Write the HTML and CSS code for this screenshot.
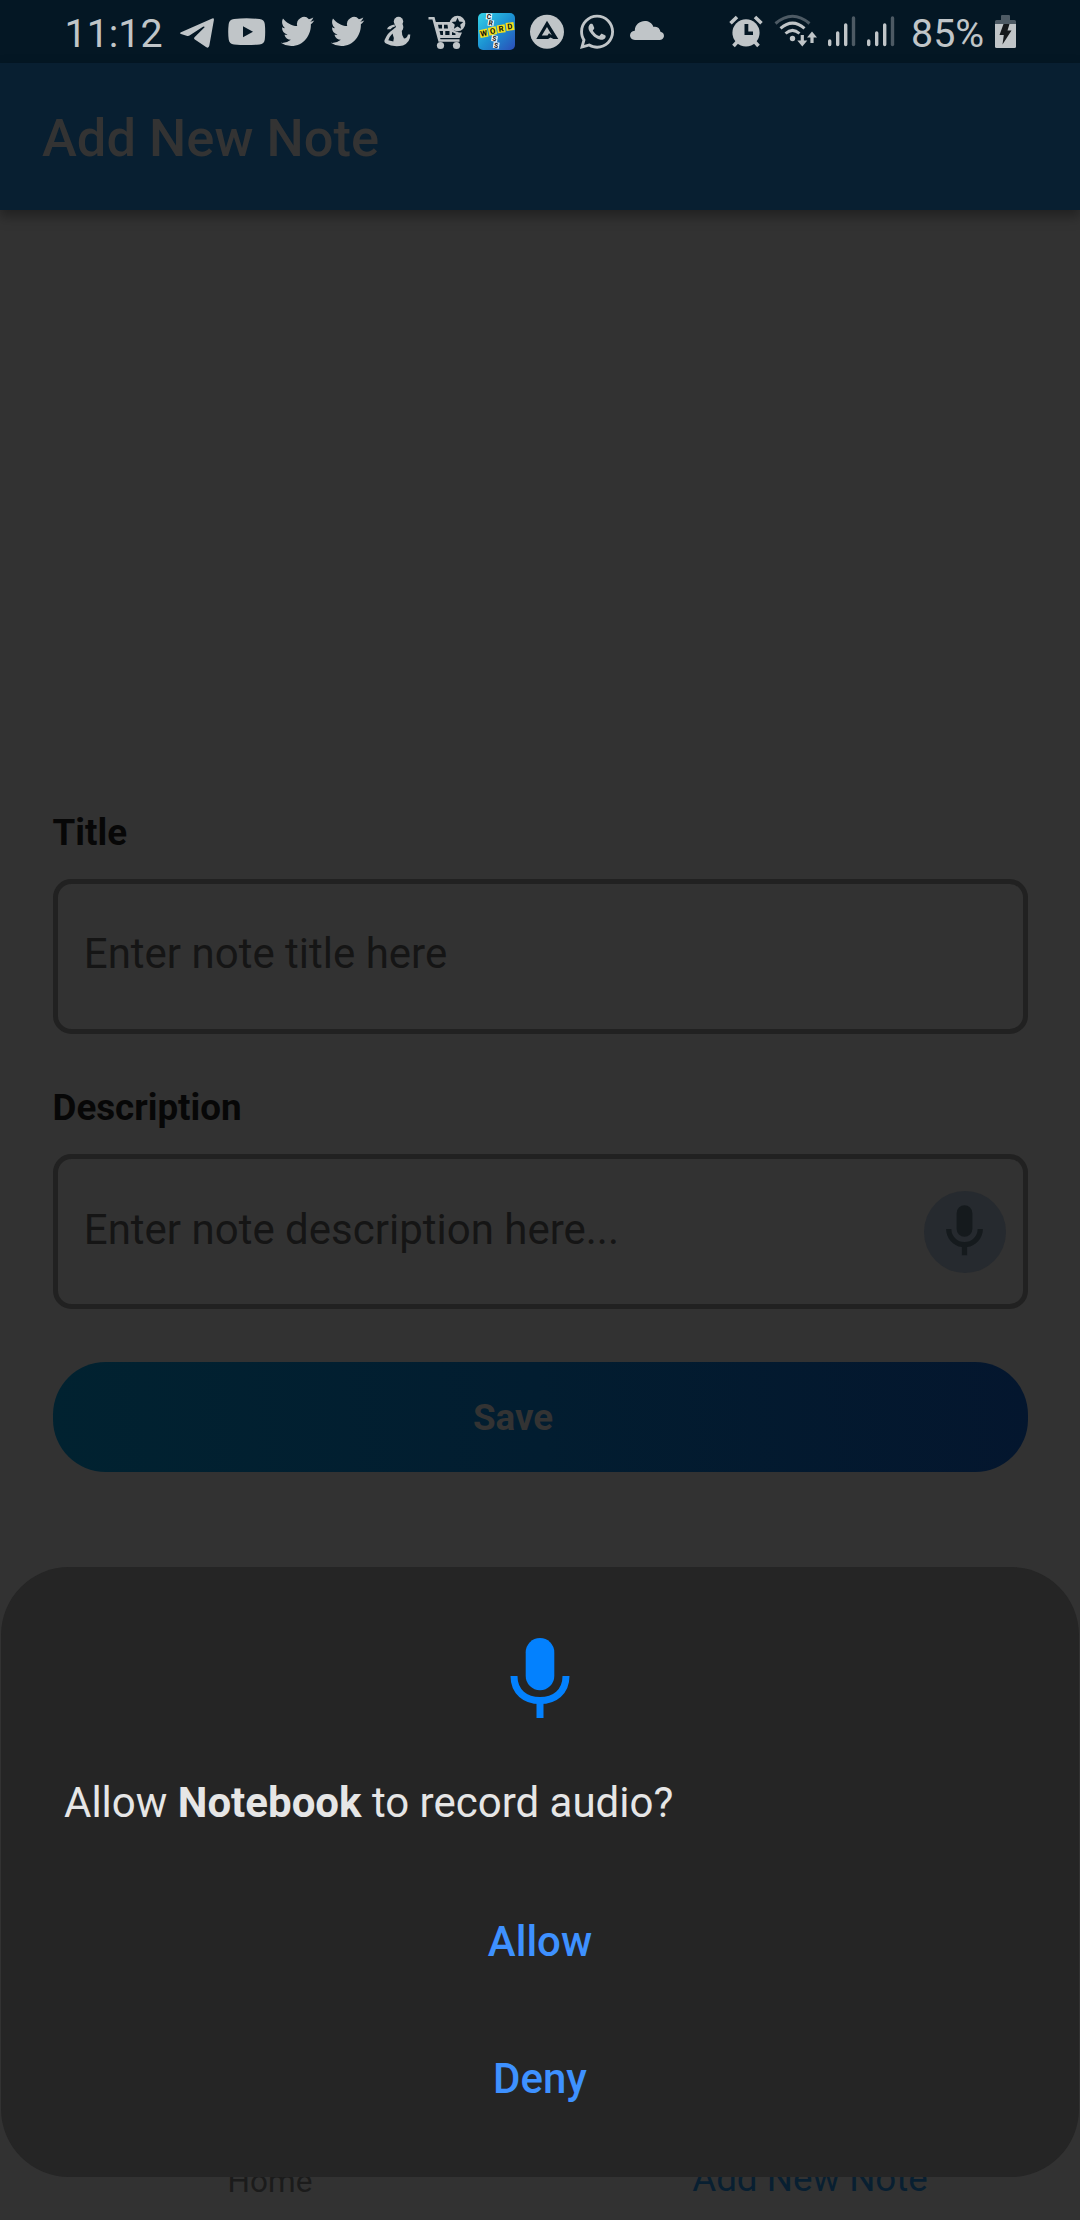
FILE: index.html
```html
<!DOCTYPE html>
<html lang="en">
<head>
<meta charset="utf-8">
<title>Add New Note</title>
<link rel="stylesheet" href="styles.css">
</head>
<body>
<div class="screen">
  <div class="status">
    <span class="time">11:12</span>
    <div class="notifications">
      <svg class="tile" viewBox="172 0 50 63"><path d="M181 32.3 212.200 18.600Q214.300 17.700 213.900 20L209.300 45.800Q208.600 48.700 206 47L194.500 39.200Q193.500 38.200 194.500 37.200L204.600 27.300Q204.500 26 203 26.700L189.500 35.600Q188.500 36.200 187.300 35.900L181 34Q179 33.200 181 32.300Z"/></svg>
      <svg class="tile" viewBox="222 0 50 63"><path fill-rule="evenodd" d="M234 19Q246.500 17.600 259.500 19 264.300 19.400 264.800 24 265.600 31.500 264.800 39.500 264.300 44 259.500 44.400 246.500 45.800 234 44.400 229.300 44 228.700 39.500 227.700 31.500 228.700 24 229.300 19.400 234 19ZM243 26.300V37.300L253 31.800Z"/></svg>
      <svg class="tile" viewBox="272 0 50 63"><path transform="translate(280.700 13.700) scale(1.400 1.490)" d="M23.953 4.57a10 10 0 01-2.825.775 4.958 4.958 0 002.163-2.723c-.951.555-2.005.959-3.127 1.184a4.92 4.92 0 00-8.384 4.482C7.69 8.095 4.067 6.13 1.640 3.162a4.822 4.822 0 00-.666 2.475c0 1.710.87 3.213 2.188 4.096a4.904 4.904 0 01-2.228-.616v.06a4.923 4.923 0 003.946 4.827 4.996 4.996 0 01-2.212.085 4.936 4.936 0 004.604 3.417 9.867 9.867 0 01-6.102 2.105c-.39 0-.779-.023-1.170-.067a13.995 13.995 0 007.557 2.209c9.053 0 13.998-7.496 13.998-13.985 0-.21 0-.42-.015-.63A9.935 9.935 0 0024 4.590z"/></svg>
      <svg class="tile" viewBox="272 0 50 63"><path transform="translate(280.700 13.700) scale(1.400 1.490)" d="M23.953 4.57a10 10 0 01-2.825.775 4.958 4.958 0 002.163-2.723c-.951.555-2.005.959-3.127 1.184a4.92 4.92 0 00-8.384 4.482C7.69 8.095 4.067 6.13 1.640 3.162a4.822 4.822 0 00-.666 2.475c0 1.710.87 3.213 2.188 4.096a4.904 4.904 0 01-2.228-.616v.06a4.923 4.923 0 003.946 4.827 4.996 4.996 0 01-2.212.085 4.936 4.936 0 004.604 3.417 9.867 9.867 0 01-6.102 2.105c-.39 0-.779-.023-1.170-.067a13.995 13.995 0 007.557 2.209c9.053 0 13.998-7.496 13.998-13.985 0-.21 0-.42-.015-.63A9.935 9.935 0 0024 4.590z"/></svg>
      <!-- seated figure -->
      <svg class="tile" viewBox="372 0 50 63"><circle cx="398.500" cy="21.500" r="4.700"/><path d="M394.500 24 402.500 24Q404.500 28 401.800 31 401.500 34.500 404 38.500 407 38.500 408 34.500L410.300 34.500Q410.500 42 403 45.500 393 47.500 386 43.500 383.500 42 384.800 39.500 387.500 33 393 29.500L396 27ZM392.500 33.500Q389.500 36.500 388.300 40.300L393.300 41.500Q394.500 37.500 392.500 33.500Z" fill-rule="evenodd"/><path d="M387 29.300Q388 25.500 394.500 24.500L395 26.500Q392 27 390.500 29.300Z"/></svg>
      <!-- cart with starred badge -->
      <svg class="tile" viewBox="422 0 50 63"><path d="M428.500 18.300H433.500L439.500 40.500H459.500" fill="none" stroke="currentColor" stroke-width="2.600"/><path fill-rule="evenodd" d="M434.500 22H450Q450.500 31 459 32.500H462L459.500 38H438.500ZM438 24.800 438.800 28.500H442V24.800ZM444 24.800V28.500H448L447.500 24.800ZM439.500 31 440.500 35H443V31ZM445.300 31V35H449.500V31ZM452 32V35H455.500V33.500Z"/><circle cx="440.500" cy="45.500" r="3.600"/><circle cx="456.500" cy="45.500" r="3.600"/><circle cx="457.500" cy="23.500" r="7.800"/><path class="cut" d="M457.500 17.700 459.200 21.500 463.300 21.900 460.200 24.700 461.100 28.700 457.500 26.600 453.900 28.700 454.800 24.700 451.700 21.900 455.800 21.500Z"/></svg>
      <!-- word puzzle game -->
      <svg class="tile" viewBox="472 0 50 63">
        <defs><linearGradient id="sea" x1="0" y1="0" x2="1" y2="1"><stop offset="0" stop-color="#35d3e8"/><stop offset=".5" stop-color="#1c92d2"/><stop offset="1" stop-color="#2b4db8"/></linearGradient></defs>
        <rect x="478" y="13" width="37" height="37" rx="5" fill="url(#sea)"/>
        <g class="letters">
          <g transform="translate(489 16.500) rotate(6)"><rect x="-3" y="-3" width="6" height="6"/><text y="2.400">C</text></g>
          <g transform="translate(490.800 23) rotate(8)"><rect x="-3" y="-3" width="6" height="6"/><text y="2.400">R</text></g>
          <g transform="translate(494.500 38.500) rotate(8)"><rect x="-3" y="-3" width="6" height="6"/><text y="2.400">S</text></g>
          <g transform="translate(496.200 45.300) rotate(8)"><rect x="-3" y="-3" width="6" height="6"/><text y="2.400">S</text></g>
        </g>
        <g class="letters wide">
          <g transform="translate(483.800 33.300) rotate(-12)"><rect x="-4" y="-4" width="8" height="8"/><text y="2.700">W</text></g>
          <g transform="translate(492.500 31) rotate(-12)"><rect x="-4" y="-4" width="8" height="8"/><text y="2.700">O</text></g>
          <g transform="translate(501.200 28.800) rotate(-8)"><rect x="-4" y="-4" width="8" height="8"/><text y="2.700">R</text></g>
          <g transform="translate(510 26.500) rotate(-8)"><rect x="-4" y="-4" width="8" height="8"/><text y="2.700">D</text></g>
        </g>
      </svg>
      <svg class="tile" viewBox="522 0 50 63"><circle cx="547" cy="31.800" r="17"/><path class="cut" fill-rule="evenodd" d="M547 20.800 558.300 39H553.500L550.500 37.600 548 39H536.300ZM547 27 541.800 35.500H547.500L549 33.300 551.800 35.200Z"/></svg>
      <svg class="tile" viewBox="572 0 50 63"><path transform="translate(576.500 11.300) scale(1.710)" d="M12.040 2C6.580 2 2.130 6.450 2.130 11.910C2.130 13.660 2.590 15.360 3.450 16.860L2.050 22L7.300 20.620C8.750 21.410 10.380 21.830 12.040 21.830C17.500 21.830 21.950 17.380 21.950 11.920C21.950 9.270 20.920 6.780 19.050 4.910C17.180 3.030 14.690 2 12.040 2M12.050 3.670C14.250 3.670 16.310 4.530 17.870 6.090C19.420 7.650 20.280 9.720 20.280 11.920C20.280 16.460 16.580 20.150 12.040 20.150C10.560 20.150 9.110 19.760 7.850 19L7.550 18.830L4.430 19.650L5.260 16.610L5.060 16.290C4.240 15 3.800 13.470 3.800 11.910C3.810 7.370 7.500 3.670 12.050 3.670M8.530 7.330C8.370 7.330 8.100 7.390 7.870 7.640C7.650 7.890 7 8.500 7 9.710C7 10.930 7.890 12.100 8 12.270C8.140 12.440 9.760 14.940 12.250 16C12.840 16.270 13.300 16.420 13.660 16.530C14.250 16.720 14.790 16.690 15.220 16.630C15.700 16.560 16.680 16.030 16.890 15.450C17.100 14.870 17.100 14.380 17.040 14.270C16.970 14.170 16.810 14.110 16.560 14C16.310 13.860 15.090 13.260 14.870 13.180C14.640 13.100 14.500 13.060 14.310 13.300C14.150 13.550 13.670 14.110 13.530 14.270C13.380 14.440 13.240 14.460 13 14.340C12.740 14.210 11.940 13.950 11 13.110C10.260 12.450 9.770 11.640 9.620 11.390C9.500 11.150 9.610 11 9.730 10.890C9.840 10.780 10 10.600 10.100 10.450C10.230 10.310 10.270 10.200 10.350 10.040C10.430 9.870 10.390 9.730 10.330 9.610C10.270 9.500 9.770 8.260 9.560 7.770C9.360 7.290 9.160 7.240 9 7.230C8.860 7.230 8.700 7.230 8.530 7.330Z"/></svg>
      <svg class="tile" viewBox="622 0 50 63"><path d="M635 40C628.300 39.700 628.500 31.300 634.800 30.800 634.800 20 650 17.300 653.500 27 659.500 26 660 31 660.500 31.700 666 33 664.500 40 659.500 40Z"/></svg>
    </div>
    <div class="system">
      <svg class="alarm" viewBox="729 0 34 63"><circle cx="746" cy="32.800" r="13.600"/><path d="M730.500 23.200 737 17M761.500 23.200 755 17" fill="none" stroke="currentColor" stroke-width="3.600"/><path d="M738 41 733.500 46M754 41 758.500 46" fill="none" stroke="currentColor" stroke-width="3.600"/><path class="cut" d="M744.500 24H748.300V31.500H753V35H744.500Z"/></svg>
      <svg class="wifi" viewBox="774 0 43 63"><g fill="none" stroke="currentColor" stroke-width="3"><path class="dim" d="M775.500 23.500Q792.500 9 809.500 23.500"/><path d="M780.500 28.300Q792.500 18 804.500 28.300M785.500 33.500Q792.500 27.300 799.500 33.500"/></g><circle cx="792.500" cy="38.500" r="2.700"/><path d="M800.700 35H803.900V40.500H807.300L802.300 46.500 797.300 40.500H800.700ZM810.400 43H813.600V37.500H817L812 31.500 807 37.500H810.400Z"/></svg>
      <svg class="bars" viewBox="828 0 28 63"><g fill="none" stroke="currentColor" stroke-width="3.400" stroke-linecap="round"><path d="M829.700 41V44.500M837.700 33V44.500M845.700 25V44.500"/><path class="dim" d="M853.500 18V44.500"/></g></svg>
      <svg class="bars" viewBox="828 0 28 63"><g fill="none" stroke="currentColor" stroke-width="3.400" stroke-linecap="round"><path d="M829.700 41V44.500M837.700 33V44.500M845.700 25V44.500"/><path class="dim" d="M853.500 18V44.500"/></g></svg>
      <span class="percent">85%</span>
      <svg class="battery" viewBox="995 0 21 63"><path class="dim-fill" d="M1001 16Q1001 15 1002 15H1009Q1010 15 1010 16V20H1014.500Q1016 20 1016 21.500V24H995V21.500Q995 20 996.500 20H1001Z"/><path d="M995 24H1016V46.500Q1016 48 1014.500 48H996.500Q995 48 995 46.500Z"/><path class="bolt" d="M1003.500 24H1009.500L1007.500 30.500H1011.500L1002.500 44.500 1003.800 35H999.500Z"/></svg>
    </div>
  </div>

  <header class="bar"><h1>Add New Note</h1></header>

  <main class="form">
    <label class="label">Title</label>
    <div class="field"><span>Enter note title here</span></div>
    <label class="label">Description</label>
    <div class="field">
      <span>Enter note description here...</span>
      <div class="mic">
        <svg viewBox="0 0 24 24"><path d="M12 2A3 3 0 0 1 15 5V11A3 3 0 0 1 9 11V5A3 3 0 0 1 12 2M19 11C19 14.530 16.390 17.440 13 17.930V21H11V17.930C7.610 17.440 5 14.530 5 11H7A5 5 0 0 0 17 11H19Z"/></svg>
      </div>
    </div>
    <div class="save">Save</div>
  </main>

  <nav class="tabs">
    <span class="tab">Home</span>
    <span class="tab active">Add New Note</span>
  </nav>

  <section class="dialog">
    <svg class="dialog-mic" viewBox="0 0 60 80"><rect x="15.700" y="0" width="28.600" height="52.300" rx="14.300"/><path d="M4 38C4 54 15.500 62.600 30 62.600S56 54 56 38" fill="none" stroke="currentColor" stroke-width="7"/><path d="M26.500 62H33.500V80H26.500Z"/></svg>
    <p class="question">Allow <b>Notebook</b> to record audio?</p>
    <div class="action">Allow</div>
    <div class="action">Deny</div>
  </section>
</div>
</body>
</html>
```
FILE: styles.css
```css
* { box-sizing: border-box; }

body {
  margin: 0;
  background: #323232;
  font-family: Roboto, sans-serif;
}

.screen {
  position: relative;
  display: flex;
  flex-direction: column;
  width: 1080px;
  height: 2220px;
  overflow: hidden;
}

svg { display: block; fill: currentColor; flex: none; }

/* Status bar */
.status {
  display: flex;
  flex: none;
  height: 63px;
  padding: 0 64px 0 64.5px;
  background: #041724;
  color: #c0c5c8;
  font-size: 39.4px;
  line-height: 67px;
}
.time { width: 107.5px; }
.notifications { display: flex; }
.tile { width: 50px; height: 63px; }
.cut { fill: #041724; }
.dim { stroke: #4d5a64; }
.dim-fill { fill: #4d5a64; }
.bolt { fill: #15191c; }
.letters rect { fill: #f4f6f6; }
.letters text {
  fill: #111;
  font-size: 6.8px;
  font-weight: 700;
  text-anchor: middle;
}
.letters.wide rect { fill: #f5e21c; }
.letters.wide text { font-size: 7.8px; }

.system { display: flex; margin-left: auto; }
.system svg { height: 63px; }
.alarm { width: 34px; }
.wifi { width: 43px; margin-left: 11px; }
.bars { width: 28px; margin-left: 11px; }
.percent { width: 73px; margin: 0 11px 0 16px; }
.battery { width: 21px; }

/* App bar */
.bar {
  display: flex;
  align-items: center;
  flex: none;
  height: 147px;
  padding: 2px 42px 0;
  background: #081f31;
  box-shadow: 0 6px 12px rgba(0, 0, 0, .36);
}
.bar h1 {
  margin: 0;
  color: #333;
  font-size: 52.5px;
  font-weight: 500;
}

/* Note form */
.form {
  display: flex;
  flex-direction: column;
  flex: 1;
  padding: 601px 52.5px 0;
}
.label {
  margin-bottom: 24.7px;
  color: #070707;
  font-size: 36.75px;
  font-weight: 700;
  line-height: 43px;
}
.field {
  display: flex;
  align-items: center;
  justify-content: space-between;
  flex: none;
  height: 155.2px;
  margin-bottom: 52.5px;
  padding: 0 17px 0 26.3px;
  border: 5.25px solid #212121;
  border-radius: 18.4px;
  color: #151515;
  font-size: 42px;
}
.field span { padding-bottom: 4.6px; }
.mic {
  display: flex;
  align-items: center;
  justify-content: center;
  width: 82px;
  height: 82px;
  border-radius: 50%;
  background: #262a2f;
  color: #151a1d;
}
.mic svg { width: 63px; height: 63px; }
.save {
  display: flex;
  align-items: center;
  justify-content: center;
  flex: none;
  height: 110px;
  padding: 1px 54px 0 0;
  border-radius: 52.5px;
  background: linear-gradient(84deg, #012230, #021d30 50%, #04162e);
  color: #333;
  font-size: 36.75px;
  font-weight: 700;
}

/* Bottom tabs */
.tabs {
  display: flex;
  align-items: flex-end;
  flex: none;
  height: 60px;
  padding-bottom: 19.5px;
}
.tab {
  flex: 1;
  color: #1b1b1b;
  font-size: 31.5px;
  line-height: 39px;
  text-align: center;
}
.tab.active {
  color: #081f31;
  font-size: 36.75px;
  line-height: 45px;
}

/* Permission dialog, above the page */
.dialog {
  position: absolute;
  top: 1567px;
  left: 1px;
  right: 1px;
  display: flex;
  flex-direction: column;
  align-items: center;
  height: 609.7px;
  padding-top: 71px;
  border-radius: 68px;
  background: #252525;
}
.dialog-mic { width: 60px; height: 80px; color: #0381fe; }
.question {
  align-self: stretch;
  margin: 60px 63px 64px;
  color: #e6e6e6;
  font-size: 42px;
  line-height: 50px;
}
.action {
  height: 137px;
  color: #3e91ff;
  font-size: 42px;
  font-weight: 500;
  line-height: 99px;
}
```
